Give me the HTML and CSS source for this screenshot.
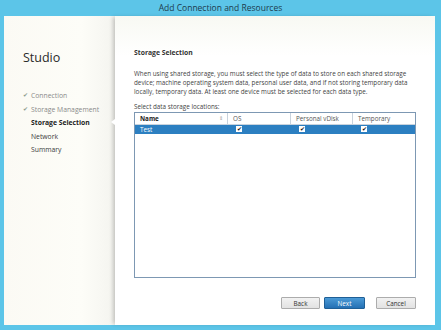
FILE: index.html
```html
<!DOCTYPE html>
<html lang="en">
<head>
  <meta charset="UTF-8" />
  <title>Add Connection and Resources</title>
  <link rel="stylesheet" href="styles.css">
</head>
<body>
  <div class="titlebar">Add Connection and Resources</div>

  <div class="window">
    <aside class="sidebar">
      <h1>Studio</h1>
      <ul class="steps">
        <li class="done"><span class="tick">&#10004;</span>Connection</li>
        <li class="done"><span class="tick">&#10004;</span>Storage Management</li>
        <li class="current">Storage Selection</li>
        <li>Network</li>
        <li>Summary</li>
      </ul>
    </aside>

    <main class="content">
      <span class="notch"></span>
      <h2>Storage Selection</h2>
      <p class="intro">When using shared storage, you must select the type of data to store on each shared storage device; machine operating system data, personal user data, and if not storing temporary data locally, temporary data. At least one device must be selected for each data type.</p>
      <p class="label">Select data storage locations:</p>

      <div class="grid">
        <div class="row head">
          <div class="cell name">Name <span class="sort">&#8661;</span></div>
          <div class="cell">OS</div>
          <div class="cell">Personal vDisk</div>
          <div class="cell">Temporary</div>
        </div>
        <div class="row selected">
          <div class="cell name">Test</div>
          <div class="cell"><span class="box">&#10004;</span></div>
          <div class="cell"><span class="box">&#10004;</span></div>
          <div class="cell"><span class="box">&#10004;</span></div>
        </div>
      </div>

      <div class="buttons">
        <button class="btn">Back</button>
        <button class="btn primary">Next</button>
        <button class="btn cancel">Cancel</button>
      </div>
    </main>
  </div>
</body>
</html>
```

FILE: styles.css
```css
* {
  margin: 0;
  padding: 0;
  box-sizing: border-box;
  font-family: 'Open Sans', 'Noto Sans', sans-serif;
}
body {
  background: #5cc5e8;
  width: 441px;
  height: 330px;
  overflow: hidden;
}
.titlebar {
  height: 16px;
  line-height: 16px;
  text-align: center;
  font-size: 8.5px;
  color: #1d3c4e;
}
.window {
  display: flex;
  height: 309px;
  margin: 0 6px 0 4px;
  background: #fbfbf6;
}
.sidebar {
  width: 111px;
  padding: 33px 0 0 19px;
  background: linear-gradient(90deg, #fbfaf4, #fdfdf8 70%, #f4f4ef);
}
.sidebar h1 {
  font-size: 12.5px;
  font-weight: 400;
  color: #2a2a2a;
  height: 18px;
  line-height: 18px;
  margin-bottom: 22px;
}
.steps {
  list-style: none;
}
.steps li {
  height: 13.5px;
  line-height: 13.5px;
  font-size: 6.8px;
  color: #3a3a3a;
  padding-left: 8px;
  position: relative;
}
.steps li.done {
  color: #8a8a8a;
}
.steps li.current {
  font-weight: 700;
  color: #222;
}
.tick {
  position: absolute;
  left: 0;
  font-size: 6px;
  color: #8a9a8a;
}
.content {
  flex: 1;
  position: relative;
  padding: 32px 19px 0 19px;
  background: linear-gradient(180deg, #f8f9f3 0, #ffffff 40px);
  box-shadow: -3px 0 4px -1px rgba(0, 0, 0, 0.2);
}
.notch {
  position: absolute;
  left: -4px;
  top: 103px;
  width: 0;
  height: 0;
  border-top: 3px solid transparent;
  border-bottom: 3px solid transparent;
  border-right: 4px solid #ffffff;
}
.content h2 {
  font-size: 6.8px;
  font-weight: 700;
  color: #333;
  height: 10px;
  line-height: 10px;
  margin-bottom: 11px;
}
.intro {
  font-size: 6.3px;
  line-height: 9px;
  color: #444;
  margin-bottom: 6px;
}
.label {
  font-size: 6.3px;
  line-height: 9px;
  color: #444;
  margin-bottom: 1px;
}
.grid {
  width: 282px;
  height: 166px;
  border: 1px solid #7d98b3;
  background: #fff;
}
.row {
  display: grid;
  grid-template-columns: 93px 63px 62px 1fr;
}
.row.head {
  height: 12px;
  border-bottom: 1px solid #c9d3dd;
}
.row.head .cell {
  border-right: 1px solid #c9d3dd;
  color: #555;
  line-height: 11px;
}
.row.head .cell:last-child {
  border-right: none;
}
.row.head .name {
  font-weight: 700;
  color: #222;
}
.cell {
  font-size: 6.3px;
  padding-left: 5px;
  position: relative;
}
.sort {
  position: absolute;
  right: 4px;
  top: 0;
  font-size: 4.5px;
  color: #999;
  font-weight: 400;
}
.row.selected {
  height: 9px;
  background: #2c7fc1;
}
.row.selected .cell {
  line-height: 9px;
  color: #fff;
}
.box {
  display: inline-block;
  width: 6px;
  height: 6px;
  margin: 1px 0 0 3px;
  background: #fff;
  color: #111;
  font-size: 6px;
  line-height: 6px;
  text-align: center;
  vertical-align: top;
}
.buttons {
  display: flex;
  justify-content: flex-end;
  margin-top: 19px;
  width: 282px;
}
.btn {
  width: 39px;
  height: 12px;
  font-size: 6.3px;
  color: #333;
  border: 1px solid #acacac;
  border-radius: 1px;
  background: linear-gradient(180deg, #f2f2f2, #e2e2e2);
}
.btn.primary {
  width: 41px;
  margin-left: 4px;
  color: #fff;
  border-color: #1f5f96;
  background: linear-gradient(180deg, #4b9ad6, #2470b4);
}
.btn.cancel {
  width: 40px;
  margin-left: 11px;
}
```
